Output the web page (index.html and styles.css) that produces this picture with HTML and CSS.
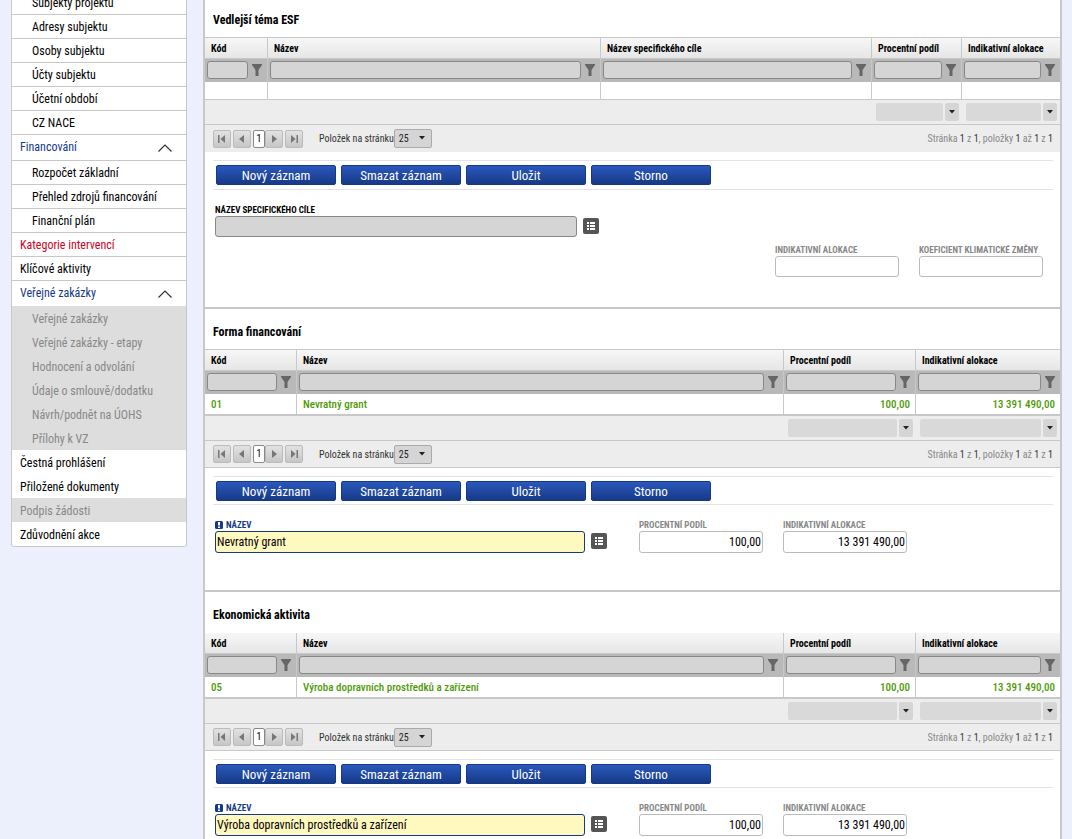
FILE: index.html
```html
<!DOCTYPE html>
<html lang="cs">
<head>
<meta charset="utf-8">
<title>Kategorie intervencí</title>
<link rel="stylesheet" href="styles.css">
</head>
<body>
<svg class="sprite" aria-hidden="true">
  <symbol id="funnel" viewBox="0 0 10 12"><path d="M0 0h10v1L6.500 6v6h-3V6L0 1z" fill="#666"/></symbol>
  <symbol id="first" viewBox="0 0 8 8"><path d="M0 0h1.500v8H0zM7 0v8L2.500 4z" fill="#777"/></symbol>
  <symbol id="prev" viewBox="0 0 8 8"><path d="M6 0v8L1 4z" fill="#777"/></symbol>
  <symbol id="next" viewBox="0 0 8 8"><path d="M2 0v8l5-4z" fill="#777"/></symbol>
  <symbol id="last" viewBox="0 0 8 8"><path d="M1 0v8l4.500-4zM6.500 0H8v8H6.500z" fill="#777"/></symbol>
  <symbol id="caret" viewBox="0 0 6 4"><path d="M0 0h6L3 3.500z" fill="#222"/></symbol>
  <symbol id="list" viewBox="0 0 8 8"><path d="M0 0h2v2H0zM3 0h5v2H3zM0 3h2v2H0zM3 3h5v2H3zM0 6h2v2H0zM3 6h5v2H3z" fill="#fff"/></symbol>
  <symbol id="chevron" viewBox="0 0 14 8"><path d="M.5 7.500L7 1l6.500 6.500" fill="none" stroke="#333" stroke-width="1.200"/></symbol>
  <symbol id="req" viewBox="0 0 8 8"><rect width="8" height="8" rx="1.500" fill="#143a87"/><path d="M3 1h2v3.500H3zM3 5.500h2V7H3z" fill="#fff"/></symbol>
</svg>
<div class="page">
  <nav class="side">
    <a class="item sub" href="#">Subjekty projektu</a>
    <a class="item sub" href="#">Adresy subjektu</a>
    <a class="item sub" href="#">Osoby subjektu</a>
    <a class="item sub" href="#">Účty subjektu</a>
    <a class="item sub" href="#">Účetní období</a>
    <a class="item sub" href="#">CZ NACE</a>
    <a class="item group" href="#">Financování<svg><use href="#chevron"/></svg></a>
    <a class="item sub" href="#">Rozpočet základní</a>
    <a class="item sub" href="#">Přehled zdrojů financování</a>
    <a class="item sub" href="#">Finanční plán</a>
    <a class="item active" href="#">Kategorie intervencí</a>
    <a class="item" href="#">Klíčové aktivity</a>
    <a class="item group before-off" href="#">Veřejné zakázky<svg><use href="#chevron"/></svg></a>
    <a class="item sub off" href="#">Veřejné zakázky</a>
    <a class="item sub off" href="#">Veřejné zakázky - etapy</a>
    <a class="item sub off" href="#">Hodnocení a odvolání</a>
    <a class="item sub off" href="#">Údaje o smlouvě/dodatku</a>
    <a class="item sub off" href="#">Návrh/podnět na ÚOHS</a>
    <a class="item sub off plain" href="#">Přílohy k VZ</a>
    <a class="item plain" href="#">Čestná prohlášení</a>
    <a class="item before-off" href="#">Přiložené dokumenty</a>
    <a class="item off plain" href="#">Podpis žádosti</a>
    <a class="item end" href="#">Zdůvodnění akce</a>
  </nav>
  <main class="main">
    <section class="block wide">
      <h2>Vedlejší téma ESF</h2>
      <table class="grid empty">
        <colgroup><col class="c63"><col><col class="c271"><col class="c90"><col class="c98"></colgroup>
        <thead>
          <tr><th>Kód</th><th>Název</th><th>Název specifického cíle</th><th>Procentní podíl</th><th>Indikativní alokace</th></tr>
          <tr class="filter">
            <td><div class="f"><input aria-label="Filtr Kód"><svg><use href="#funnel"/></svg></div></td>
            <td><div class="f"><input aria-label="Filtr Název"><svg><use href="#funnel"/></svg></div></td>
            <td><div class="f"><input aria-label="Filtr Název specifického cíle"><svg><use href="#funnel"/></svg></div></td>
            <td><div class="f"><input aria-label="Filtr Procentní podíl"><svg><use href="#funnel"/></svg></div></td>
            <td><div class="f"><input aria-label="Filtr Indikativní alokace"><svg><use href="#funnel"/></svg></div></td>
          </tr>
        </thead>
        <tbody><tr><td></td><td></td><td></td><td></td><td></td></tr></tbody>
        <tfoot><tr><td></td><td></td><td></td>
          <td><div class="agg"><span></span><button aria-label="Souhrn"><svg><use href="#caret"/></svg></button></div></td>
          <td><div class="agg"><span></span><button aria-label="Souhrn"><svg><use href="#caret"/></svg></button></div></td>
        </tr></tfoot>
      </table>
      <div class="pager">
        <button aria-label="První"><svg><use href="#first"/></svg></button>
        <button aria-label="Předchozí"><svg><use href="#prev"/></svg></button>
        <span class="cur">1</span>
        <button aria-label="Další"><svg><use href="#next"/></svg></button>
        <button aria-label="Poslední"><svg><use href="#last"/></svg></button>
        <label for="p1">Položek na stránku</label>
        <div class="sel"><select id="p1"><option>25</option></select><svg><use href="#caret"/></svg></div>
        <p class="info">Stránka <b>1</b> z <b>1</b>, položky <b>1</b> až <b>1</b> z <b>1</b></p>
      </div>
      <div class="actions"><button>Nový záznam</button><button>Smazat záznam</button><button>Uložit</button><button>Storno</button></div>
      <div class="form">
        <div class="field name dark">
          <label for="n1">NÁZEV SPECIFICKÉHO CÍLE</label>
          <div class="pick"><input id="n1" class="ro"><button aria-label="Vybrat"><svg><use href="#list"/></svg></button></div>
        </div>
      </div>
      <div class="form right">
        <div class="field num"><label for="a1">INDIKATIVNÍ ALOKACE</label><input id="a1"></div>
        <div class="field num"><label for="k1">KOEFICIENT KLIMATICKÉ ZMĚNY</label><input id="k1"></div>
      </div>
    </section>

    <section class="block">
      <h2>Forma financování</h2>
      <table class="grid">
        <colgroup><col class="c92"><col><col class="c132"><col class="c144"></colgroup>
        <thead>
          <tr><th>Kód</th><th>Název</th><th>Procentní podíl</th><th>Indikativní alokace</th></tr>
          <tr class="filter">
            <td><div class="f"><input aria-label="Filtr Kód"><svg><use href="#funnel"/></svg></div></td>
            <td><div class="f"><input aria-label="Filtr Název"><svg><use href="#funnel"/></svg></div></td>
            <td><div class="f"><input aria-label="Filtr Procentní podíl"><svg><use href="#funnel"/></svg></div></td>
            <td><div class="f"><input aria-label="Filtr Indikativní alokace"><svg><use href="#funnel"/></svg></div></td>
          </tr>
        </thead>
        <tbody><tr><td>01</td><td>Nevratný grant</td><td class="r">100,00</td><td class="r">13 391 490,00</td></tr></tbody>
        <tfoot><tr><td></td><td></td>
          <td><div class="agg"><span></span><button aria-label="Souhrn"><svg><use href="#caret"/></svg></button></div></td>
          <td><div class="agg"><span></span><button aria-label="Souhrn"><svg><use href="#caret"/></svg></button></div></td>
        </tr></tfoot>
      </table>
      <div class="pager lined">
        <button aria-label="První"><svg><use href="#first"/></svg></button>
        <button aria-label="Předchozí"><svg><use href="#prev"/></svg></button>
        <span class="cur">1</span>
        <button aria-label="Další"><svg><use href="#next"/></svg></button>
        <button aria-label="Poslední"><svg><use href="#last"/></svg></button>
        <label for="p2">Položek na stránku</label>
        <div class="sel"><select id="p2"><option>25</option></select><svg><use href="#caret"/></svg></div>
        <p class="info">Stránka <b>1</b> z <b>1</b>, položky <b>1</b> až <b>1</b> z <b>1</b></p>
      </div>
      <div class="actions"><button>Nový záznam</button><button>Smazat záznam</button><button>Uložit</button><button>Storno</button></div>
      <div class="form">
        <div class="field name req">
          <label for="n2"><svg><use href="#req"/></svg>NÁZEV</label>
          <div class="pick"><input id="n2" value="Nevratný grant"><button aria-label="Vybrat"><svg><use href="#list"/></svg></button></div>
        </div>
        <div class="field num"><label for="c2">PROCENTNÍ PODÍL</label><input id="c2" value="100,00"></div>
        <div class="field num"><label for="a2">INDIKATIVNÍ ALOKACE</label><input id="a2" value="13 391 490,00"></div>
      </div>
    </section>

    <section class="block">
      <h2>Ekonomická aktivita</h2>
      <table class="grid open">
        <colgroup><col class="c92"><col><col class="c132"><col class="c144"></colgroup>
        <thead>
          <tr><th>Kód</th><th>Název</th><th>Procentní podíl</th><th>Indikativní alokace</th></tr>
          <tr class="filter">
            <td><div class="f"><input aria-label="Filtr Kód"><svg><use href="#funnel"/></svg></div></td>
            <td><div class="f"><input aria-label="Filtr Název"><svg><use href="#funnel"/></svg></div></td>
            <td><div class="f"><input aria-label="Filtr Procentní podíl"><svg><use href="#funnel"/></svg></div></td>
            <td><div class="f"><input aria-label="Filtr Indikativní alokace"><svg><use href="#funnel"/></svg></div></td>
          </tr>
        </thead>
        <tbody><tr><td>05</td><td>Výroba dopravních prostředků a zařízení</td><td class="r">100,00</td><td class="r">13 391 490,00</td></tr></tbody>
        <tfoot><tr><td></td><td></td>
          <td><div class="agg"><span></span><button aria-label="Souhrn"><svg><use href="#caret"/></svg></button></div></td>
          <td><div class="agg"><span></span><button aria-label="Souhrn"><svg><use href="#caret"/></svg></button></div></td>
        </tr></tfoot>
      </table>
      <div class="pager lined">
        <button aria-label="První"><svg><use href="#first"/></svg></button>
        <button aria-label="Předchozí"><svg><use href="#prev"/></svg></button>
        <span class="cur">1</span>
        <button aria-label="Další"><svg><use href="#next"/></svg></button>
        <button aria-label="Poslední"><svg><use href="#last"/></svg></button>
        <label for="p3">Položek na stránku</label>
        <div class="sel"><select id="p3"><option>25</option></select><svg><use href="#caret"/></svg></div>
        <p class="info">Stránka <b>1</b> z <b>1</b>, položky <b>1</b> až <b>1</b> z <b>1</b></p>
      </div>
      <div class="actions"><button>Nový záznam</button><button>Smazat záznam</button><button>Uložit</button><button>Storno</button></div>
      <div class="form">
        <div class="field name req">
          <label for="n3"><svg><use href="#req"/></svg>NÁZEV</label>
          <div class="pick"><input id="n3" value="Výroba dopravních prostředků a zařízení"><button aria-label="Vybrat"><svg><use href="#list"/></svg></button></div>
        </div>
        <div class="field num"><label for="c3">PROCENTNÍ PODÍL</label><input id="c3" value="100,00"></div>
        <div class="field num"><label for="a3">INDIKATIVNÍ ALOKACE</label><input id="a3" value="13 391 490,00"></div>
      </div>
    </section>
  </main>
</div>
</body>
</html>
```
FILE: styles.css
```css
* { box-sizing: border-box; }
body { margin: 0; height: 100vh; overflow: hidden; background: #ecf0fd; color: #000; }
body, input, select, button { font-family: "Roboto Condensed", "Liberation Sans Narrow", Roboto, sans-serif; font-size: 12px; }
svg { display: block; flex: none; }
.sprite { display: none; }
button { padding: 0; display: flex; align-items: center; justify-content: center; }
input { min-width: 0; margin: 0; padding: 0 1px; border-radius: 3px; }

.page { display: flex; align-items: flex-start; gap: 16px; padding: 0 10px 0 11px; }

.side { width: 176px; flex: none; margin-top: -9px; border: 1px solid #c8c8c8; border-width: 0 1px; border-radius: 0 0 3px 3px; background: #fff; }
.item { display: flex; align-items: center; height: 24px; padding: 0 14px 0 8px; border-bottom: 1px solid #c8c8c8; color: #000; text-decoration: none; white-space: nowrap; }
.sub { padding-left: 20px; }
.group { height: 26px; padding-bottom: 2px; color: #143a87; justify-content: space-between; }
.group svg { width: 14px; height: 8px; margin-top: 3px; }
.active { color: #d0021b; }
.off { background: #ddd; background-clip: padding-box; color: #888; border-color: #ddd; }
.before-off { border-color: #ddd; }
.plain { border-color: #fff; }
.end { border-radius: 0 0 3px 3px; }

.main { flex: 1; min-width: 0; margin-top: -3px; border: 2px solid #c8c8c8; border-width: 0 2px; background: #fff; }
.block { border-bottom: 2px solid #c8c8c8; padding-bottom: 37px; }
.wide { padding-bottom: 30px; }
h2 { margin: 0; padding: 4px 8px 0; height: 40px; font-size: 12px; font-weight: 700; line-height: 38px; }

.grid { width: 100%; table-layout: fixed; border-collapse: separate; border-spacing: 0; border-top: 1px solid #c8c8c8; }
.grid.open { border-top-color: transparent; }
.c63 { width: 63px; } .c90 { width: 90px; } .c98 { width: 98px; } .c271 { width: 271px; }
.c92 { width: 92px; } .c132 { width: 132px; } .c144 { width: 144px; }
.grid th, .grid td { padding: 0 5px 0 6px; border-right: 1px solid #c8c8c8; white-space: nowrap; overflow: hidden; }
.grid th:last-child, .grid td:last-child { border-right: 0; }
.grid th { height: 21px; font-size: 10px; text-align: left; background: linear-gradient(#f7f7f7, #e6e6e6); border-bottom: 1px solid #c8c8c8; }
.grid .filter td { height: 23px; padding: 0 0 2px 2px; background: #b9b9b9; }
.f { display: flex; align-items: center; gap: 4px; padding-right: 5px; }
.f input { flex: 1; height: 18px; border: 1px solid #888; background: #d5d5d5; }
.f svg { width: 10px; height: 12px; }
.grid tbody td { height: 22px; font-size: 11px; font-weight: 500; color: #4e9a06; border-bottom: 2px solid #c8c8c8; }
.grid.empty tbody td { height: 18px; border-bottom-width: 1px; }
.grid .r { text-align: right; }
.grid tfoot td { height: 25px; padding: 0 3px 0 4px; background: #ededed; border-right: 0; border-bottom: 1px solid #c8c8c8; }
.agg { display: flex; gap: 2px; }
.agg span { flex: 1; height: 18px; border-radius: 2px; background: #d9d9d9; }
.agg button { width: 14px; height: 18px; border: 0; border-radius: 2px; background: #d5d5d5; }
.agg svg, .sel svg { width: 6px; height: 4px; }

.pager { display: flex; align-items: center; height: 27px; padding: 0 7px 0 8px; background: #ededed; font-size: 10px; color: #333; }
.lined { border-bottom: 1px solid #c8c8c8; }
.pager button { width: 18px; height: 18px; margin-right: 2px; border: 1px solid #bbb; border-radius: 2px; background: linear-gradient(#e2e2e2, #c6c6c6); }
.pager button svg { width: 8px; height: 8px; }
.cur { width: 12px; height: 18px; line-height: 16px; text-align: center; border: 1px solid #888; border-radius: 2px; background: #fff; color: #000; }
.pager label { margin-left: 14px; }
.sel { position: relative; }
.sel select { display: block; appearance: none; width: 38px; height: 19px; padding: 0 4px; border: 1px solid #aaa; border-radius: 2px; background: #d5d5d5; font-size: 10px; color: #222; }
.sel svg { position: absolute; right: 7px; top: 7px; pointer-events: none; }
.info { margin: 0 0 0 auto; color: #888; }
.info b { font-weight: 400; color: #333; }

.actions { display: flex; gap: 5px; margin: 8px 7px 0 8px; padding: 4px 3px; border: 1px solid #e3e3e3; border-width: 1px 0; }
.lined + .actions { padding-bottom: 3px; }
.actions button { width: 120px; height: 20px; border: 1px solid #143a87; border-radius: 2px; background: linear-gradient(#2a58bd, #173a86); color: #fff; font-size: 13px; }

.form { display: flex; gap: 20px; padding: 14px 17px 0 10px; }
.form.right { justify-content: flex-end; padding-top: 7px; }
.field label { display: flex; align-items: center; gap: 3px; height: 12px; font-size: 9px; font-weight: 700; color: #888; white-space: nowrap; }
.field label svg { width: 8px; height: 8px; }
.field input { display: block; height: 22px; border: 1px solid #bbb; background: #fff; font-size: 12px; }
.wide .field input { height: 21px; }
.name { margin-right: 12px; }
.num { width: 124px; }
.num input { width: 100%; text-align: right; }
.pick { display: flex; align-items: center; gap: 6px; }
.pick input { width: 370px; }
.pick .ro { width: 362px; background: #d5d5d5; border-color: #888; }
.pick button { width: 16px; height: 16px; margin-bottom: 2px; border: 0; border-radius: 2px; background: #555; }
.pick button svg { width: 8px; height: 8px; }
.dark label { color: #000; }
.req label { color: #143a87; }
.req input { background: #fff8bf; border-color: #143a87; }
```
